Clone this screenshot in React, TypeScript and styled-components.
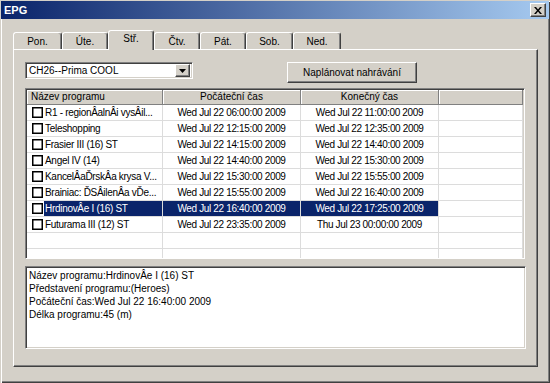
import React from "react";
import styled, { createGlobalStyle, css } from "styled-components";

const GlobalStyle = createGlobalStyle`
  html, body {
    margin: 0;
    padding: 0;
    background: #d4d0c8;
  }
  body {
    font-family: "Liberation Sans", Arial, sans-serif;
    font-size: 10px;
    color: #000;
  }
`;

const sunken = css`
  box-sizing: border-box;
  border: 1px solid;
  border-color: #808080 #fff #fff #808080;
  box-shadow: inset 1px 1px 0 #404040, inset -1px -1px 0 #d4d0c8;
  background: #fff;
`;

const raised = css`
  box-sizing: border-box;
  border: 1px solid;
  border-color: #fff #404040 #404040 #fff;
  box-shadow: inset -1px -1px 0 #808080;
  background: #d4d0c8;
`;

const Window = styled.div`
  width: 550px;
  height: 383px;
  box-sizing: border-box;
  padding: 1px 1px 2px 1px;
  background: #d4d0c8;
  box-shadow: inset 1px 1px 0 #d4d0c8, inset 2px 2px 0 #fff,
    inset -1px -1px 0 #404040, inset -2px -2px 0 #808080;
  display: flex;
  flex-direction: column;
`;

const TitleBar = styled.div`
  height: 18px;
  display: flex;
  align-items: center;
  justify-content: space-between;
  padding-left: 3px;
  background: linear-gradient(to right, #0a246a, #a6caf0);
  color: #fff;
  font-weight: bold;
  font-size: 11px;
`;

const CloseButton = styled.div`
  ${raised};
  width: 16px;
  height: 14px;
  margin-right: 3px;
  display: flex;
  align-items: center;
  justify-content: center;
`;

const Body = styled.div`
  padding: 11px 11px 0 12px;
`;

const TabStrip = styled.div`
  display: flex;
  align-items: flex-end;
  height: 20px;
  position: relative;
  z-index: 1;
  margin-bottom: -1px;
`;

const Tab = styled.div<{ $w: number; $active?: boolean }>`
  box-sizing: border-box;
  width: ${(p) => p.$w}px;
  height: ${(p) => (p.$active ? 20 : 17)}px;
  margin-bottom: ${(p) => (p.$active ? 0 : 1)}px;
  padding-top: ${(p) => (p.$active ? 2 : 3)}px;
  text-align: center;
  background: #d4d0c8;
  border: 1px solid;
  border-bottom: none;
  border-color: #fff #404040 transparent #fff;
  border-radius: 3px 3px 0 0;
  box-shadow: inset -1px 0 0 #808080;
`;

const Panel = styled.div`
  box-sizing: border-box;
  width: 525px;
  height: 318px;
  padding: 12px 0 0 11px;
  border: 1px solid;
  border-color: #fff #404040 #404040 #fff;
  box-shadow: inset -1px -1px 0 #808080;
`;

const TopRow = styled.div`
  display: flex;
  align-items: flex-start;
  height: 21px;
`;

const Combo = styled.div`
  ${sunken};
  width: 168px;
  height: 17px;
  display: flex;
  align-items: center;
  justify-content: space-between;
  padding: 2px 2px 2px 3px;
`;

const ComboArrow = styled.div`
  ${raised};
  width: 15px;
  height: 13px;
  display: flex;
  align-items: center;
  justify-content: center;
`;

const PushButton = styled.div`
  ${raised};
  margin-left: 94px;
  width: 130px;
  height: 21px;
  display: flex;
  align-items: center;
  justify-content: center;
`;

const List = styled.div`
  ${sunken};
  margin-top: 5px;
  width: 500px;
  height: 171px;
  padding: 1px;
  overflow: hidden;
`;

const HeaderRow = styled.div`
  display: flex;
  height: 15px;
`;

const HeaderCell = styled.div<{ $w?: number; $left?: boolean }>`
  box-sizing: border-box;
  ${(p) => (p.$w ? `width: ${p.$w}px;` : "flex: 1;")}
  height: 15px;
  line-height: 13px;
  padding-left: ${(p) => (p.$left ? 4 : 0)}px;
  text-align: ${(p) => (p.$left ? "left" : "center")};
  background: #d4d0c8;
  border-right: 1px solid #808080;
  border-bottom: 1px solid #808080;
  box-shadow: inset 1px 1px 0 #fff;
`;

const Row = styled.div`
  display: flex;
  height: 16px;
`;

const Cell = styled.div<{ $w?: number; $sel?: boolean }>`
  box-sizing: border-box;
  ${(p) => (p.$w ? `width: ${p.$w}px;` : "flex: 1;")}
  height: 16px;
  line-height: 15px;
  text-align: center;
  white-space: nowrap;
  overflow: hidden;
  letter-spacing: -0.35px;
  border-right: 1px solid #dcdcdc;
  border-bottom: 1px solid #dcdcdc;
  background: ${(p) => (p.$sel ? "#0a246a" : "#fff")};
  color: ${(p) => (p.$sel ? "#fff" : "#000")};
`;

const NameCell = styled.div`
  box-sizing: border-box;
  width: 136px;
  height: 16px;
  display: flex;
  align-items: center;
  padding-left: 5px;
  border-right: 1px solid #dcdcdc;
  border-bottom: 1px solid #dcdcdc;
  background: #fff;
`;

const Check = styled.span`
  box-sizing: border-box;
  width: 11px;
  height: 11px;
  flex: none;
  border: 1px solid #000;
  box-shadow: inset 0 0 0 0.5px #000;
`;

const NameText = styled.span<{ $sel?: boolean }>`
  flex: 1;
  height: 15px;
  line-height: 15px;
  margin-left: 1px;
  padding-left: 1px;
  white-space: nowrap;
  overflow: hidden;
  letter-spacing: -0.3px;
  background: ${(p) => (p.$sel ? "#0a246a" : "transparent")};
  color: ${(p) => (p.$sel ? "#fff" : "#000")};
`;

const InfoBox = styled.div`
  ${sunken};
  margin-top: 7px;
  width: 501px;
  height: 83px;
  padding: 2px 3px;
  line-height: 13px;
`;

const tabs = [
  { label: "Pon.", w: 49 },
  { label: "Úte.", w: 46 },
  { label: "Stř.", w: 46, active: true },
  { label: "Čtv.", w: 46 },
  { label: "Pát.", w: 46 },
  { label: "Sob.", w: 47 },
  { label: "Ned.", w: 48 },
];

const programs = [
  { name: "R1 - regionÂalnÂi vysÂil...", start: "Wed Jul 22 06:00:00 2009", end: "Wed Jul 22 11:00:00 2009" },
  { name: "Teleshopping", start: "Wed Jul 22 12:15:00 2009", end: "Wed Jul 22 12:35:00 2009" },
  { name: "Frasier III (16) ST", start: "Wed Jul 22 14:15:00 2009", end: "Wed Jul 22 14:40:00 2009" },
  { name: "Angel IV (14)", start: "Wed Jul 22 14:40:00 2009", end: "Wed Jul 22 15:30:00 2009" },
  { name: "KancelÂaĎrskÂa krysa V...", start: "Wed Jul 22 15:30:00 2009", end: "Wed Jul 22 15:55:00 2009" },
  { name: "Brainiac: ĎSÂilenÂa vĎe...", start: "Wed Jul 22 15:55:00 2009", end: "Wed Jul 22 16:40:00 2009" },
  { name: "HrdinovÂe I (16) ST", start: "Wed Jul 22 16:40:00 2009", end: "Wed Jul 22 17:25:00 2009", selected: true },
  { name: "Futurama III (12) ST", start: "Wed Jul 22 23:35:00 2009", end: "Thu Jul 23 00:00:00 2009" },
];

const CloseIcon = () => (
  <svg width="8" height="7" viewBox="0 0 8 7">
    <path d="M0 0h2l2 2.5L6 0h2L5 3.5 8 7H6L4 4.5 2 7H0l3-3.5z" fill="#000" />
  </svg>
);

const ArrowIcon = () => (
  <svg width="7" height="4" viewBox="0 0 7 4">
    <path d="M0 0h7L3.5 4z" fill="#000" />
  </svg>
);

export default function App() {
  return (
    <>
      <GlobalStyle />
      <Window>
        <TitleBar>
          <span>EPG</span>
          <CloseButton>
            <CloseIcon />
          </CloseButton>
        </TitleBar>
        <Body>
          <TabStrip>
            {tabs.map((t) => (
              <Tab key={t.label} $w={t.w} $active={t.active}>
                {t.label}
              </Tab>
            ))}
          </TabStrip>
          <Panel>
            <TopRow>
              <Combo>
                <span>CH26--Prima COOL</span>
                <ComboArrow>
                  <ArrowIcon />
                </ComboArrow>
              </Combo>
              <PushButton>Naplánovat nahrávání</PushButton>
            </TopRow>
            <List>
              <HeaderRow>
                <HeaderCell $w={136} $left>
                  Název programu
                </HeaderCell>
                <HeaderCell $w={138}>Počáteční čas</HeaderCell>
                <HeaderCell $w={138}>Konečný čas</HeaderCell>
                <HeaderCell />
              </HeaderRow>
              {programs.map((p) => (
                <Row key={p.name}>
                  <NameCell>
                    <Check />
                    <NameText $sel={p.selected}>{p.name}</NameText>
                  </NameCell>
                  <Cell $w={138} $sel={p.selected}>
                    {p.start}
                  </Cell>
                  <Cell $w={138} $sel={p.selected}>
                    {p.end}
                  </Cell>
                  <Cell />
                </Row>
              ))}
              {[0, 1].map((i) => (
                <Row key={"empty" + i}>
                  <NameCell />
                  <Cell $w={138} />
                  <Cell $w={138} />
                  <Cell />
                </Row>
              ))}
            </List>
            <InfoBox>
              <div>Název programu:HrdinovÂe I (16) ST</div>
              <div>Představení programu:(Heroes)</div>
              <div>Počáteční čas:Wed Jul 22 16:40:00 2009</div>
              <div>Délka programu:45 (m)</div>
            </InfoBox>
          </Panel>
        </Body>
      </Window>
    </>
  );
}
